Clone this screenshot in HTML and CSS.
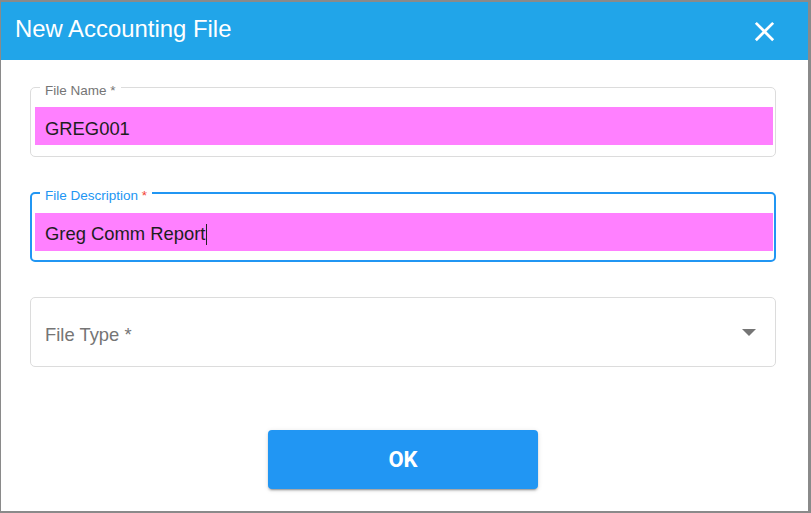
FILE: index.html
```html
<!DOCTYPE html>
<html lang="en">
<head>
<meta charset="utf-8">
<title>New Accounting File</title>
<link rel="stylesheet" href="styles.css">
</head>
<body>
<div class="screen">
  <div class="dialog">
    <header class="dialog-header">
      <h1 class="dialog-title">New Accounting File</h1>
      <button class="close-btn" aria-label="Close">
        <svg width="33" height="33" viewBox="0 0 24 24"><path fill="#fff" d="M19 6.41L17.59 5 12 10.59 6.41 5 5 6.41 10.59 12 5 17.59 6.41 19 12 13.41 17.59 19 19 17.59 13.41 12z"/></svg>
      </button>
    </header>
    <div class="dialog-body">
      <div class="field">
        <span class="field-label">File Name *</span>
        <div class="field-input">GREG001</div>
      </div>
      <div class="field field-focused">
        <span class="field-label">File Description <span class="req">*</span></span>
        <div class="field-input">Greg Comm Report<span class="caret"></span></div>
      </div>
      <div class="field field-select">
        <span class="placeholder">File Type *</span>
        <svg class="select-arrow" width="14" height="7" viewBox="0 0 14 7"><path fill="#757575" d="M0 0h14L7 7z"/></svg>
      </div>
      <div class="actions">
        <button class="ok-btn">OK</button>
      </div>
    </div>
  </div>
</div>
</body>
</html>
```

FILE: styles.css
```css
* { box-sizing: border-box; }
html, body { margin: 0; padding: 0; }
body {
  width: 811px;
  height: 513px;
  overflow: hidden;
  font-family: "Liberation Sans", Arial, sans-serif;
}
.screen {
  width: 811px;
  height: 513px;
  padding: 2px 3px 2px 1px;
  background: #8a8a8a;
}
.dialog {
  width: 807px;
  height: 509px;
  background: #fff;
  display: flex;
  flex-direction: column;
}
.dialog-header {
  height: 58px;
  background: #21a5e9;
  display: flex;
  align-items: center;
  justify-content: space-between;
  padding: 0 27px 0 14px;
}
.dialog-title {
  margin: 0;
  padding-bottom: 5px;
  font-size: 23.9px;
  font-weight: 400;
  color: #fff;
  line-height: normal;
}
.close-btn {
  border: 0;
  background: none;
  padding: 0;
  width: 33px;
  height: 33px;
  display: flex;
}
.dialog-body {
  padding: 27px 32px 0 29px;
  display: flex;
  flex-direction: column;
  gap: 35px;
}
.field {
  position: relative;
  height: 70px;
  border: 1px solid #dcdcdc;
  border-radius: 5px;
  padding: 19px 2px 0 4px;
}
.field-label {
  position: absolute;
  top: -5px;
  left: 9px;
  padding: 0 5px;
  background: #fff;
  font-size: 13.5px;
  line-height: 15px;
  color: #757575;
}
.field-focused {
  border: 2px solid #2196f3;
  padding: 19px 1px 0 3px;
}
.field-focused .field-label {
  top: -6px;
  left: 8px;
  color: #2196f3;
}
.req { color: #f44336; }
.field-input {
  height: 38px;
  background: #ff80ff;
  padding: 5px 0 0 10px;
  font-size: 18.4px;
  line-height: 33px;
  color: #1e1e1e;
  white-space: nowrap;
}
.field-focused .field-input {
  padding-top: 4px;
}
.caret {
  display: inline-block;
  width: 1px;
  height: 21px;
  margin-left: 1px;
  background: #222;
  vertical-align: -5px;
}
.field-select {
  display: flex;
  align-items: center;
  padding: 0 19px 0 14px;
}
.placeholder {
  padding-top: 5px;
  font-size: 18.4px;
  color: #757575;
}
.select-arrow { margin-left: auto; }
.actions {
  margin-top: 28px;
  display: flex;
  justify-content: center;
}
.ok-btn {
  width: 270px;
  height: 59px;
  border: 0;
  border-radius: 4px;
  background: #2196f3;
  color: #fff;
  font-family: Roboto, "Liberation Sans", sans-serif;
  font-weight: 700;
  font-size: 22px;
  box-shadow: 0 3px 1px -2px rgba(0,0,0,.2), 0 2px 2px 0 rgba(0,0,0,.14), 0 1px 5px 0 rgba(0,0,0,.12);
}
```
